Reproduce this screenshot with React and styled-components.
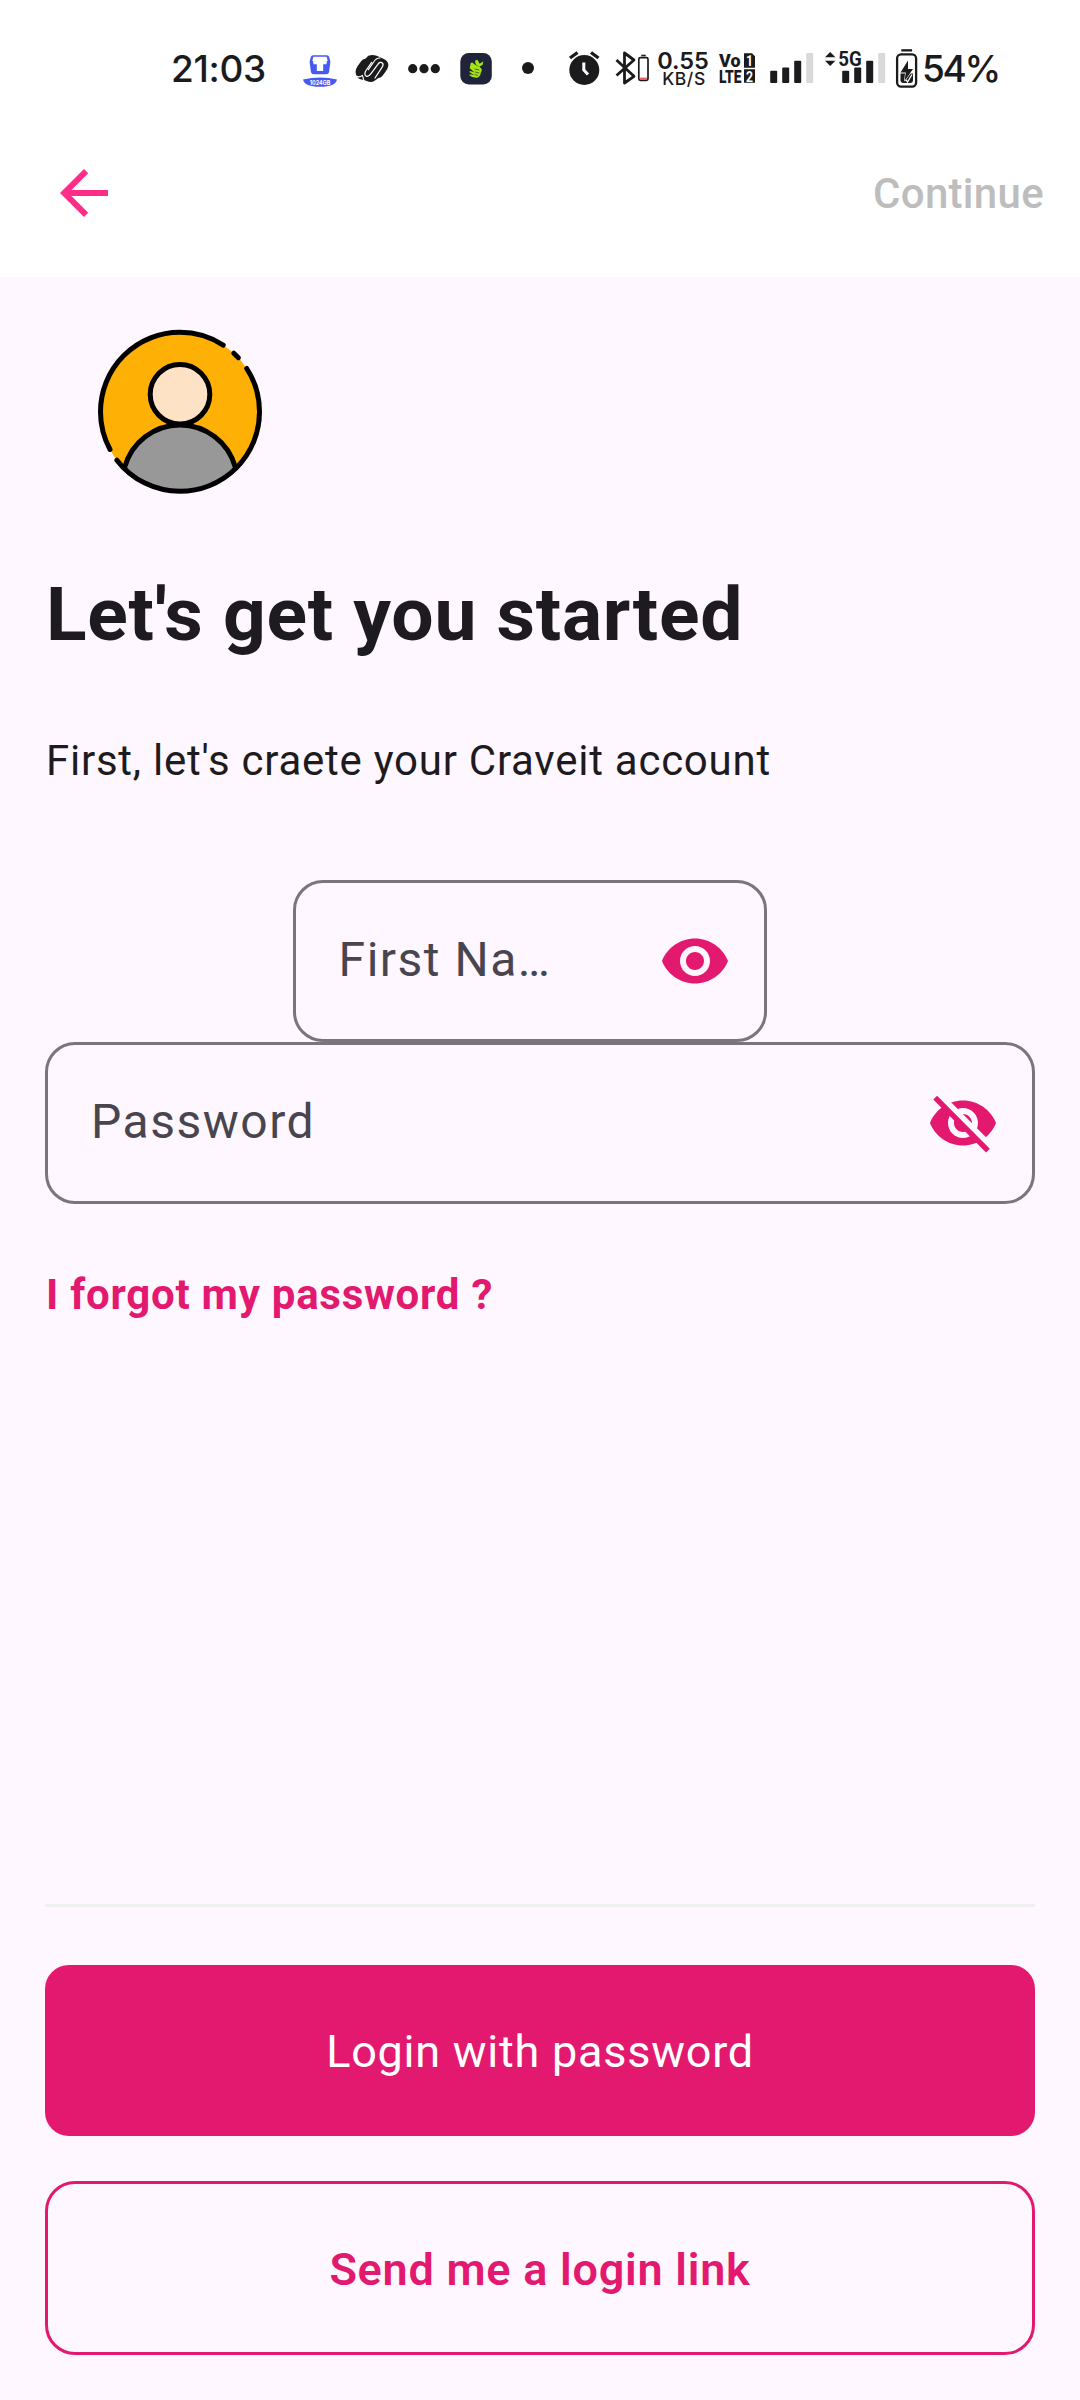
import React from "react";
import styled, { createGlobalStyle, css } from "styled-components";

const ink = "#1b1b1d";
const pink = "#e3196f";

const GlobalStyle = createGlobalStyle`
  *, *::before, *::after { box-sizing: border-box; }
  body {
    margin: 0;
    background: #fef7ff;
    font-family: Roboto, "Liberation Sans", sans-serif;
    color: #1d1b20;
  }
  button { font: inherit; }
`;

const Screen = styled.div`
  display: flex;
  flex-direction: column;
  width: 1080px;
  height: 2400px;
  overflow: hidden;
  background: #fef7ff;
`;

/* ---------- status bar ---------- */

const StatusBar = styled.div`
  display: flex;
  align-items: center;
  flex: none;
  height: 109px;
  padding: 27px 0 0 171px;
  background: #fff;
  color: ${ink};
  font-family: Inter, "Liberation Sans", sans-serif;
`;

const StatusText = styled.span`
  flex: none;
  width: ${(p) => p.$width}px;
  margin-left: ${(p) => p.$gap || 0}px;
  font-size: 37px;
  line-height: 49px;
  font-weight: 500;
  letter-spacing: ${(p) => p.$spacing}px;
  white-space: nowrap;
`;

const Glyph = styled.svg`
  display: block;
  flex: none;
  height: 48px;
  margin-left: ${(p) => p.$gap || 0}px;
  fill: ${ink};
`;

const Speed = styled.div`
  display: flex;
  flex-direction: column;
  align-items: center;
  flex: none;
  width: 54px;
  margin-left: 4px;
  padding-top: 3px;
  font-weight: 600;
`;

const SpeedValue = styled.span`
  font-size: 23.5px;
  line-height: 18px;
`;

const SpeedUnit = styled.span`
  padding-left: 2px;
  font-size: 17.5px;
  line-height: 17px;
  font-weight: 500;
  letter-spacing: 0.6px;
`;

function StatusIcon({ x, width, gap, children }) {
  return (
    <Glyph $gap={gap} width={width} viewBox={`${x} 44 ${width} 48`} aria-hidden="true">
      {children}
    </Glyph>
  );
}

function SignalBars({ x }) {
  return (
    <g>
      <rect x={x} y="70.7" width="7" height="12.3" rx="1" />
      <rect x={x + 12} y="67.6" width="7" height="15.4" rx="1" />
      <rect x={x + 24} y="60.7" width="7" height="22.3" rx="1" />
      <rect x={x + 36} y="53" width="7" height="30" rx="1" fill="#d9d9d9" />
    </g>
  );
}

function PhoneStatus() {
  return (
    <StatusBar>
      <StatusText $width={99} $spacing={-0.3}>21:03</StatusText>

      <StatusIcon x={300} width={40} gap={30}>
        <path d="M313 55.2h14q1.6 0 2.1 1.6l1.3 5-1.3 10q-.4 2.500-2.800 2.500h-12.600q-2.400 0-2.800-2.500l-1.300-10 1.300-5q.5-1.600 2.100-1.600z" fill="#4759f2" />
        <path d="M313.400 56.800h13.200l1.200 4.300h-15.600z" fill="#fff" />
        <path d="M313 61h14l-.6 3.300h-3.200v6.700h-6.400v-6.700h-3.200z" fill="#fff" />
        <path d="M303 79.500Q320 75.500 337 79.500Q335.500 86.800 320 86.800Q304.500 86.800 303 79.500z" fill="#4759f2" />
        <text x="309.700" y="84.700" fontSize="6" fontWeight="700" textLength="20.600" lengthAdjust="spacingAndGlyphs" fill="#fff">1024GB</text>
      </StatusIcon>

      <StatusIcon x={352} width={40} gap={12}>
        <g transform="translate(150 30) scale(.33333)">
          <path d="M655 77Q672 72 687 80L703 88Q716 94 715 108Q713 117 706 126L697 138Q692 144 685 144L674 152Q664 159 652 154L640 149Q624 150 619 136Q613 124 623 108L634 93Q638 87 646 86Z" />
          <g fill="none" stroke="#fff" strokeWidth="3.600" strokeLinecap="round" strokeLinejoin="round">
            <path d="M665 97L647 123Q641 135 650 139Q657 140 663 131L683 104Q690 93 697 99Q702 104 696 112L675 144" />
            <path d="M690 84Q678 84 671 96L655 119" />
            <path d="M620 139Q629 143 637 136L641 148" />
          </g>
        </g>
      </StatusIcon>

      <StatusIcon x={404} width={40} gap={12}>
        <circle cx="412.700" cy="68.700" r="4.600" />
        <circle cx="424" cy="68.700" r="4.600" />
        <circle cx="435.300" cy="68.700" r="4.600" />
      </StatusIcon>

      <StatusIcon x={456} width={40} gap={12}>
        <rect x="460.300" y="53" width="31.500" height="31.500" rx="8.500" fill="#20243a" />
        <g transform="translate(440 30) scale(.33333)" fill="#a5e416">
          <path d="M105 92L112 89 119 101 130 94 128 104 117 111 107 103Z" />
          <path d="M92 100Q97 94 102 102L111 107Q121 109 125 117Q127 122 122 129Q122 138 112 143Q97 144 88 136L90 133 103 136 88 126 90 123 103 127 89 115Z" />
          <path d="M104 117l14 3M105 126l13 3M104 134l10 2" stroke="#20243a" strokeWidth="2" />
        </g>
      </StatusIcon>

      <StatusIcon x={516} width={24} gap={20}>
        <circle cx="528" cy="68" r="6" />
      </StatusIcon>

      <StatusIcon x={564} width={40} gap={24}>
        <circle cx="584.300" cy="70" r="15" />
        <path d="M570 58l7.500-5.500M598.500 58l-7.500-5.500" stroke={ink} strokeWidth="3.400" />
        <path d="M583.800 62.500v7.500l4.200 4.600" fill="none" stroke="#fff" strokeWidth="3" />
      </StatusIcon>

      <StatusIcon x={612} width={40} gap={8}>
        <path d="M616.500 60l17.500 16.300-9.500 6.700V53l9.500 7-17.500 15.500" fill="none" stroke={ink} strokeWidth="2.800" strokeLinejoin="round" />
        <rect x="638.800" y="57.700" width="9.200" height="22.600" rx="1.600" fill="none" stroke={ink} strokeWidth="1.700" />
        <rect x="641.300" y="54.700" width="4.400" height="1.600" />
        <rect x="640" y="77.600" width="6.800" height="2" fill="#ef5a63" />
      </StatusIcon>

      <Speed>
        <SpeedValue>0.55</SpeedValue>
        <SpeedUnit>KB/S</SpeedUnit>
      </Speed>

      <StatusIcon x={716} width={42} gap={6}>
        <g fontFamily="Roboto, sans-serif" fontWeight="900">
          <text x="719" y="67.200" fontSize="19" textLength="21.500" lengthAdjust="spacingAndGlyphs">Vo</text>
          <text x="719" y="82.800" fontSize="18" textLength="22.500" lengthAdjust="spacingAndGlyphs">LTE</text>
          <path d="M744 53.200h8l3 3v11.500h-11zM744 69.300h11v13.500h-11z" />
          <text x="746" y="66" fontSize="15" fontWeight="700" textLength="7" lengthAdjust="spacingAndGlyphs" fill="#fff">1</text>
          <text x="746" y="81.500" fontSize="15" fontWeight="700" textLength="7" lengthAdjust="spacingAndGlyphs" fill="#fff">2</text>
        </g>
      </StatusIcon>

      <StatusIcon x={768} width={48} gap={10}>
        <SignalBars x={770.2} />
      </StatusIcon>

      <StatusIcon x={822} width={66} gap={6}>
        <path d="M825 57.300l5.200-5.300 5.200 5.300zM825 60.700h10.400l-5.200 5.300z" />
        <SignalBars x={842.2} />
        <text x="838.300" y="66" fontFamily="Roboto, sans-serif" fontWeight="700" fontSize="19.500" textLength="23.500" lengthAdjust="spacingAndGlyphs" stroke="#fff" strokeWidth="2" paintOrder="stroke">5G</text>
      </StatusIcon>

      <StatusIcon x={892} width={28} gap={4}>
        <rect x="901.300" y="49.200" width="10.800" height="2.300" />
        <rect x="897.100" y="54.300" width="19" height="32.300" rx="4" fill="none" stroke={ink} strokeWidth="2.300" />
        <path d="M900.500 73.500h12.500v6.500q0 3-3 3h-6.500q-3 0-3-3z" />
        <path d="M908 60.500l-7.500 12h5.300l-1.200 8.500 8.400-12h-5z" stroke="#fff" strokeWidth="1.200" paintOrder="stroke" />
        <path d="M905.800 79.500l1.700 2.500 4.500-7.500" fill="none" stroke="#fff" strokeWidth="1.300" />
      </StatusIcon>

      <StatusText $width={82} $gap={2} $spacing={-2.3}>54%</StatusText>
    </StatusBar>
  );
}

/* ---------- app bar ---------- */

const AppBar = styled.header`
  display: flex;
  align-items: center;
  justify-content: space-between;
  flex: none;
  height: 168px;
  padding: 0 36px 0 48px;
  background: #fff;
`;

const BackButton = styled.button`
  display: flex;
  padding: 0;
  border: 0;
  background: none;
  color: #ff2d87;
`;

const ContinueButton = styled.button`
  padding: 2px 0 0;
  border: 0;
  background: none;
  color: #bdbdbd;
  font-size: 42px;
  line-height: 50px;
  font-weight: 500;
  letter-spacing: 0.3px;
`;

const MaterialSvg = styled.svg`
  display: block;
  flex: none;
  width: 72px;
  height: 72px;
  fill: currentColor;
`;

function MaterialIcon({ path }) {
  return (
    <MaterialSvg viewBox="0 0 24 24" aria-hidden="true">
      <path d={path} />
    </MaterialSvg>
  );
}

const icons = {
  back: "M20 11H7.830l5.590-5.590L12 4l-8 8 8 8 1.410-1.410L7.830 13H20v-2z",
  eye: "M12 4.500C7 4.500 2.730 7.610 1 12c1.730 4.390 6 7.500 11 7.500s9.270-3.110 11-7.500c-1.730-4.390-6-7.500-11-7.500zM12 17c-2.760 0-5-2.240-5-5s2.240-5 5-5 5 2.240 5 5-2.240 5-5 5zm0-8c-1.660 0-3 1.340-3 3s1.340 3 3 3 3-1.340 3-3-1.340-3-3-3z",
};

/* Crossed-out eye: a filled eye with a cleared diagonal band and a solid slash. */
function EyeOffIcon() {
  return (
    <MaterialSvg viewBox="0 0 24 24" aria-hidden="true">
      <defs>
        <mask id="eye-slash-gap" maskUnits="userSpaceOnUse" x="0" y="0" width="24" height="24">
          <rect width="24" height="24" fill="#fff" />
          <path d="M1 1.200L4 1.100L23 20.100L20 20.200z" fill="#000" />
        </mask>
      </defs>
      <path d={icons.eye} mask="url(#eye-slash-gap)" />
      <path d="M2.100 4.200L3.360 2.940L20.950 20.600L19.690 21.860z" />
    </MaterialSvg>
  );
}

/* ---------- content ---------- */

const Content = styled.main`
  display: flex;
  flex-direction: column;
  flex: 1;
  min-height: 0;
  padding: 45px;
`;

const Avatar = styled.svg`
  display: block;
  flex: none;
  width: 180px;
  height: 180px;
  margin-left: 45px;
`;

const Title = styled.h1`
  margin: 68px 0 0 1px;
  font-size: 75px;
  line-height: 88px;
  font-weight: 700;
  letter-spacing: 0.75px;
`;

const Subtitle = styled.p`
  margin: 78px 0 0 1px;
  font-size: 42px;
  line-height: 50px;
  letter-spacing: 0.75px;
`;

const Fields = styled.div`
  display: flex;
  flex-direction: column;
  margin-top: 94px;
`;

const Field = styled.label`
  display: flex;
  align-items: center;
  justify-content: space-between;
  height: 162px;
  padding: 0 33px 0 43px;
  border: 3px solid #79747e;
  border-radius: 30px;
  color: #49454f;
  ${(p) =>
    p.$compact &&
    css`
      width: 474px;
      margin-left: 247.600px;
    `}
`;

const FieldLabel = styled.span`
  padding-bottom: 3px;
  font-size: 48px;
  line-height: 57px;
  letter-spacing: 1.5px;
  white-space: nowrap;
`;

const FieldAction = styled.span`
  display: flex;
  color: ${pink};
`;

const ForgotLink = styled.a`
  align-self: flex-start;
  margin: 66px 0 0 1px;
  color: ${pink};
  font-size: 42px;
  line-height: 50px;
  font-weight: 700;
  letter-spacing: 0.75px;
`;

const Actions = styled.section`
  display: flex;
  flex-direction: column;
  margin-top: auto;
`;

const Divider = styled.hr`
  width: 100%;
  height: 3px;
  margin: 0 0 58.500px;
  border: 0;
  background: #efefef;
`;

const ActionButton = styled.button`
  width: 100%;
  padding: 2px 0 0;
  font-size: 45px;
  letter-spacing: 0.75px;
  text-align: center;
  ${(p) =>
    p.$outlined
      ? css`
          height: 174px;
          margin-top: 45px;
          border: 3px solid ${pink};
          border-radius: 30px;
          background: transparent;
          color: ${pink};
          font-weight: 600;
        `
      : css`
          height: 171px;
          border: 0;
          border-radius: 24px;
          background: ${pink};
          color: #fff;
          font-weight: 400;
        `}
`;

function ProfileAvatar() {
  return (
    <Avatar viewBox="90 322 180 180" aria-hidden="true">
      <circle cx="180" cy="411.800" r="79.500" fill="#ffb005" />
      <path d="M124.200 468.400A57.500 57.500 0 0 1 235.800 468.400A79.500 79.500 0 0 1 180 491.300A79.500 79.500 0 0 1 124.200 468.400z" fill="#989898" />
      <circle cx="180" cy="394.300" r="29.800" fill="#fde2c6" stroke="#000" strokeWidth="5" />
      <g fill="none" stroke="#000" strokeWidth="5" strokeLinecap="round">
        <path d="M124.700 467.200A57.300 57.300 0 0 1 235.300 467.200" />
        <path d="M223.200 345.100A79.500 79.500 0 0 0 180 332.300A79.500 79.500 0 0 0 100.500 411.800A79.500 79.500 0 0 0 110 449.500" />
        <path d="M116.900 460.200A79.500 79.500 0 0 0 180 491.300A79.500 79.500 0 0 0 259.500 411.800A79.500 79.500 0 0 0 246.700 368.500" />
        <path d="M233.800 353.200L238.400 357.700" />
      </g>
    </Avatar>
  );
}

export default function App() {
  return (
    <Screen>
      <GlobalStyle />
      <PhoneStatus />
      <AppBar>
        <BackButton aria-label="Back">
          <MaterialIcon path={icons.back} />
        </BackButton>
        <ContinueButton>Continue</ContinueButton>
      </AppBar>
      <Content>
        <ProfileAvatar />
        <Title>Let's get you started</Title>
        <Subtitle>First, let's craete your Craveit account</Subtitle>
        <Fields>
          <Field $compact>
            <FieldLabel>First Na…</FieldLabel>
            <FieldAction>
              <MaterialIcon path={icons.eye} />
            </FieldAction>
          </Field>
          <Field>
            <FieldLabel>Password</FieldLabel>
            <FieldAction>
              <EyeOffIcon />
            </FieldAction>
          </Field>
        </Fields>
        <ForgotLink>I forgot my password ?</ForgotLink>
        <Actions>
          <Divider />
          <ActionButton>Login with password</ActionButton>
          <ActionButton $outlined>Send me a login link</ActionButton>
        </Actions>
      </Content>
    </Screen>
  );
}
